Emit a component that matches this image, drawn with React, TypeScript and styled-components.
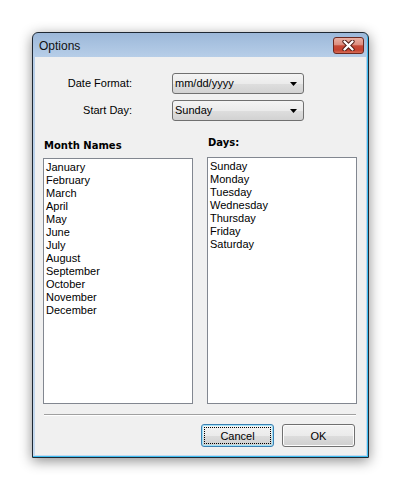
import { createGlobalStyle, styled } from "styled-components"

const GlobalStyle = createGlobalStyle`
  html, body {
    margin: 0;
    padding: 0;
    background: #ffffff;
  }
  body {
    font-family: "Liberation Sans", Arial, sans-serif;
    font-size: 11px;
    color: #000;
  }
`

const Stage = styled.div`
  width: 401px;
  height: 491px;
  padding: 32px 0 0 32px;
  box-sizing: border-box;
`

const Window = styled.div`
  width: 337px;
  height: 426px;
  box-sizing: border-box;
  border: 1px solid #1e2833;
  border-radius: 6px 6px 0 0;
  background: linear-gradient(to bottom, #9cb8d9 0px, #b7cee8 24px, #c5d9ee 100%);
  box-shadow: 0 3px 13px rgba(0, 0, 0, 0.45), inset -1px -1px 0 #3dbdf0;
  padding: 0 2px 2px 2px;
  display: flex;
  flex-direction: column;
`

const TitleBar = styled.div`
  height: 24px;
  display: flex;
  align-items: center;
  padding: 0 2px 0 4px;
`

const Title = styled.span`
  font-size: 12px;
  color: #111;
  margin-top: 1px;
`

const CloseButton = styled.div`
  margin-left: auto;
  width: 31px;
  height: 17px;
  box-sizing: border-box;
  border: 1px solid #6b2820;
  border-radius: 3px;
  background: linear-gradient(
    to bottom,
    #eab0a3 0%,
    #dc8d7e 45%,
    #c64a37 52%,
    #c3412f 80%,
    #d66d57 100%
  );
  display: flex;
  align-items: center;
  justify-content: center;
  margin-top: 1px;
`

const Client = styled.div`
  flex: 1;
  background: #f0f0f0;
  padding: 16px 9px 8px 8px;
  display: flex;
  flex-direction: column;
  box-sizing: border-box;
  min-height: 0;
`

const Form = styled.div`
  display: grid;
  grid-template-columns: 89px 132px;
  column-gap: 40px;
  row-gap: 6px;
`

const FieldLabel = styled.label`
  text-align: right;
  line-height: 21px;
  white-space: nowrap;
`

const Combo = styled.div`
  height: 21px;
  box-sizing: border-box;
  border: 1px solid #707070;
  border-radius: 3px;
  background: linear-gradient(to bottom, #f4f4f4 0%, #ebebeb 50%, #dedede 51%, #d2d2d2 100%);
  display: flex;
  align-items: center;
  padding: 0 6px 0 2px;
  line-height: 19px;
`

const ComboText = styled.span`
  flex: 1;
`

const Columns = styled.div`
  flex: 1;
  display: flex;
  gap: 14px;
  margin-top: 15px;
  min-height: 0;
`

const Column = styled.div<{ $offset: number }>`
  width: 150px;
  display: flex;
  flex-direction: column;
  padding-top: ${(p) => p.$offset}px;
`

const ColumnTitle = styled.div<{ $space: number }>`
  font-family: "DejaVu Sans", Verdana, sans-serif;
  font-weight: bold;
  font-size: 10px;
  line-height: 13px;
  padding-left: 1px;
  margin-bottom: ${(p) => p.$space}px;
`

const ListBox = styled.div`
  flex: 1;
  background: #fff;
  border: 1px solid #828790;
  padding: 2px 2px 1px;
`

const ListItem = styled.div`
  line-height: 13px;
  white-space: nowrap;
`

const Separator = styled.div`
  margin: 10px 1px 0 1px;
  border-top: 1px solid #a0a0a0;
  border-bottom: 1px solid #ffffff;
`

const ButtonRow = styled.div`
  display: flex;
  justify-content: flex-end;
  gap: 8px;
  margin-top: 8px;
  margin-right: 2px;
`

const Button = styled.div<{ $focused?: boolean }>`
  position: relative;
  width: 73px;
  height: 23px;
  box-sizing: border-box;
  border: 1px solid ${(p) => (p.$focused ? "#3c7fb1" : "#707070")};
  border-radius: 3px;
  background: linear-gradient(to bottom, #f3f3f3 0%, #ebebeb 50%, #dddddd 51%, #cfcfcf 100%);
  box-shadow: ${(p) => (p.$focused ? "inset 0 0 0 1px #9ee2fa" : "inset 0 0 0 1px #fcfcfc")};
  display: flex;
  align-items: center;
  justify-content: center;

  &::after {
    content: "";
    display: ${(p) => (p.$focused ? "block" : "none")};
    position: absolute;
    inset: 2px;
    border: 1px dotted #000;
  }
`

const Arrow = () => (
  <svg width="7" height="4" viewBox="0 0 7 4">
    <path d="M0 0 H7 L3.5 4 Z" fill="#000" />
  </svg>
)

const CloseGlyph = () => (
  <svg width="13" height="11" viewBox="0 0 13 11">
    <path d="M2.5 1.5 L10.5 9.5 M10.5 1.5 L2.5 9.5" stroke="#4a1710" strokeWidth="4.2" strokeLinecap="round" />
    <path d="M2.5 1.5 L10.5 9.5 M10.5 1.5 L2.5 9.5" stroke="#ffffff" strokeWidth="2.4" strokeLinecap="round" />
  </svg>
)

const months = [
  "January",
  "February",
  "March",
  "April",
  "May",
  "June",
  "July",
  "August",
  "September",
  "October",
  "November",
  "December",
]

const days = ["Sunday", "Monday", "Tuesday", "Wednesday", "Thursday", "Friday", "Saturday"]

const App = () => {
  return (
    <>
      <GlobalStyle />
      <Stage>
        <Window>
          <TitleBar>
            <Title>Options</Title>
            <CloseButton>
              <CloseGlyph />
            </CloseButton>
          </TitleBar>
          <Client>
            <Form>
              <FieldLabel>Date Format:</FieldLabel>
              <Combo>
                <ComboText>mm/dd/yyyy</ComboText>
                <Arrow />
              </Combo>
              <FieldLabel>Start Day:</FieldLabel>
              <Combo>
                <ComboText>Sunday</ComboText>
                <Arrow />
              </Combo>
            </Form>
            <Columns>
              <Column $offset={3}>
                <ColumnTitle $space={6}>Month Names</ColumnTitle>
                <ListBox>
                  {months.map((m) => (
                    <ListItem key={m}>{m}</ListItem>
                  ))}
                </ListBox>
              </Column>
              <Column $offset={0}>
                <ColumnTitle $space={8}>Days:</ColumnTitle>
                <ListBox>
                  {days.map((d) => (
                    <ListItem key={d}>{d}</ListItem>
                  ))}
                </ListBox>
              </Column>
            </Columns>
            <Separator />
            <ButtonRow>
              <Button $focused>Cancel</Button>
              <Button>OK</Button>
            </ButtonRow>
          </Client>
        </Window>
      </Stage>
    </>
  )
}

export default App
